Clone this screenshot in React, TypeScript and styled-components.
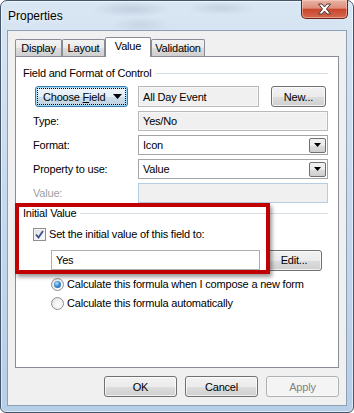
import React from 'react';
import styled, { createGlobalStyle } from 'styled-components';

const GlobalStyle = createGlobalStyle`
  * { box-sizing: border-box; }
  html, body {
    margin: 0;
    padding: 0;
    background: #ffffff;
  }
  body {
    font-family: "Liberation Sans", Arial, sans-serif;
    font-size: 11px;
    letter-spacing: -0.2px;
    color: #000;
  }
`;

const Window = styled.div`
  width: 354px;
  height: 413px;
  border: 1px solid #44566b;
  border-radius: 7px 7px 6px 6px;
  padding: 0 6px 6px;
  display: flex;
  flex-direction: column;
  background:
    radial-gradient(ellipse 40px 8px at 130px 8px, rgba(150,165,185,0.35), transparent),
    radial-gradient(ellipse 35px 7px at 220px 7px, rgba(150,165,185,0.3), transparent),
    radial-gradient(ellipse 30px 8px at 140px 24px, rgba(150,165,185,0.25), transparent),
    linear-gradient(180deg, #d9e6f3 0%, #c9dbee 40%, #b7cee7 100%);
  box-shadow: inset 0 0 0 1px rgba(255, 255, 255, 0.55);
`;

const TitleBar = styled.div`
  height: 29px;
  display: flex;
  justify-content: space-between;
  align-items: flex-start;
  margin-right: -1px;
`;

const Title = styled.div`
  padding: 7px 0 0 1px;
  font-size: 12px;
  line-height: 16px;
  letter-spacing: 0;
  color: #000;
  text-shadow: 0 0 6px rgba(255, 255, 255, 0.9);
`;

const CloseButton = styled.div`
  width: 47px;
  height: 19px;
  margin-top: -1px;
  border: 1px solid #6b2418;
  border-top: none;
  border-radius: 0 0 5px 5px;
  display: flex;
  align-items: center;
  justify-content: center;
  background: linear-gradient(180deg, #eab3a6 0%, #de8d7b 45%, #c9462d 52%, #d4694f 100%);
  box-shadow: inset 0 0 0 1px rgba(255, 220, 210, 0.45);
`;

const Client = styled.div`
  flex: 1;
  display: flex;
  flex-direction: column;
  border: 1px solid #8d9fb4;
  background: #f0f0f0;
  padding: 6px 7px 8px;
`;

const TabStrip = styled.div`
  height: 19px;
  display: flex;
  align-items: flex-end;
  position: relative;
  z-index: 1;
`;

const Tab = styled.div<{ $active?: boolean; $w: number }>`
  width: ${p => p.$w}px;
  height: ${p => (p.$active ? 20 : 17)}px;
  margin-bottom: ${p => (p.$active ? -1 : 0)}px;
  border: 1px solid #898c95;
  border-bottom: none;
  border-radius: 2px 2px 0 0;
  display: flex;
  align-items: center;
  justify-content: center;
  padding-bottom: ${p => (p.$active ? 3 : 0)}px;
  background: ${p => (p.$active
    ? '#ffffff'
    : 'linear-gradient(180deg, #f3f3f3 0%, #ebebeb 50%, #dddddd 51%, #cfcfcf 100%)')};
`;

const Panel = styled.div`
  flex: 1;
  position: relative;
  background: #fff;
  border: 1px solid #898c95;
  padding: 8px 10px 0 7px;
  display: flex;
  flex-direction: column;
`;

const GroupHeader = styled.div<{ $mt?: number }>`
  display: flex;
  align-items: center;
  gap: 4px;
  line-height: 16px;
  margin-top: ${p => p.$mt || 0}px;
  &::after {
    content: '';
    flex: 1;
    border-top: 1px solid #d5dfe5;
  }
`;

const FieldList = styled.div`
  display: flex;
  flex-direction: column;
  gap: 4px;
  margin-top: 5px;
  padding-left: 10px;
`;

const Row = styled.div<{ $h?: number }>`
  display: flex;
  align-items: center;
  height: ${p => p.$h || 20}px;
`;

const LabelCell = styled.div<{ $disabled?: boolean }>`
  width: 105px;
  flex: none;
  color: ${p => (p.$disabled ? '#a0a0a0' : '#000')};
  display: flex;
  align-items: center;
`;

const TextBox = styled.div<{ $variant?: 'normal' | 'readonly' | 'disabled'; $w?: number }>`
  height: 100%;
  ${p => (p.$w ? `width: ${p.$w}px; flex: none;` : 'flex: 1;')}
  display: flex;
  align-items: center;
  padding: 0 4px;
  border: 1px solid ${p => (p.$variant === 'disabled' ? '#b7cde2' : p.$variant === 'readonly' ? '#b9b9b9' : '#abadb3')};
  background: ${p => (p.$variant === 'normal' ? '#ffffff' : '#f0f0f0')};
  box-shadow: ${p => (p.$variant === 'readonly' ? 'inset 0 0 0 1px #f7f7f7' : 'none')};
`;

const SelectBox = styled.div`
  flex: 1;
  height: 100%;
  display: flex;
  align-items: center;
  justify-content: space-between;
  padding: 0 1px 0 4px;
  border: 1px solid #a5a5a5;
  background: #fff;
`;

const DropButton = styled.div`
  width: 17px;
  height: 15px;
  border: 1px solid #707070;
  border-radius: 2px;
  display: flex;
  align-items: center;
  justify-content: center;
  background: linear-gradient(180deg, #f2f2f2 0%, #ebebeb 50%, #dddddd 51%, #cfcfcf 100%);
`;

const PushButton = styled.div<{ $disabled?: boolean; $w: number }>`
  width: ${p => p.$w}px;
  height: 21px;
  flex: none;
  display: flex;
  align-items: center;
  justify-content: center;
  border: 1px solid ${p => (p.$disabled ? '#adb2b5' : '#707070')};
  border-radius: 3px;
  color: ${p => (p.$disabled ? '#838383' : '#000')};
  background: ${p => (p.$disabled
    ? '#f4f4f4'
    : 'linear-gradient(180deg, #f2f2f2 0%, #ebebeb 50%, #dddddd 51%, #cfcfcf 100%)')};
  box-shadow: inset 0 0 0 1px rgba(255, 255, 255, ${p => (p.$disabled ? 0.3 : 0.7)});
`;

const ChooseButton = styled.div`
  margin-left: 2px;
  width: 93px;
  height: 21px;
  padding: 2px;
  border: 1px solid #3c7fb1;
  border-radius: 3px;
  background: linear-gradient(180deg, #eef5fa 0%, #e3eef6 50%, #cfdfeb 51%, #bfd2e0 100%);
  box-shadow: inset 0 0 0 1px #9fdcfc;
`;

const FocusRect = styled.div`
  height: 100%;
  outline: 1px dotted #000;
  display: flex;
  align-items: center;
  justify-content: space-between;
  padding: 0 3px 0 5px;
  & u { text-decoration: underline; }
`;

const SideButtonSlot = styled.div`
  margin-left: auto;
  padding-right: 2px;
  display: flex;
`;

const Section = styled.div`
  padding-left: 10px;
  display: flex;
  flex-direction: column;
`;

const CheckRow = styled.div`
  height: 16px;
  margin-top: 5px;
  display: flex;
  align-items: center;
  gap: 3px;
`;

const CheckBox = styled.div`
  width: 13px;
  height: 13px;
  border: 1px solid #8f8f8f;
  background: linear-gradient(135deg, #d8d8d8 0%, #f4f4f4 60%, #ffffff 100%);
  box-shadow: inset 0 0 0 1px #f4f4f4;
  display: flex;
  align-items: center;
  justify-content: center;
`;

const InputRow = styled.div`
  height: 20px;
  margin-top: 8px;
  padding-left: 18px;
  display: flex;
  gap: 6px;
  align-items: center;
`;

const RadioRow = styled.div<{ $mt: number }>`
  height: 16px;
  margin-top: ${p => p.$mt}px;
  padding-left: 18px;
  display: flex;
  align-items: center;
  gap: 3px;
`;

const Radio = styled.div<{ $checked?: boolean }>`
  width: 13px;
  height: 13px;
  border-radius: 50%;
  border: 1px solid #8f8f8f;
  background: radial-gradient(circle at 60% 60%, #ffffff 0%, #f0f0f0 50%, #d4d4d4 100%);
  display: flex;
  align-items: center;
  justify-content: center;
  &::after {
    content: '';
    display: ${p => (p.$checked ? 'block' : 'none')};
    width: 7px;
    height: 7px;
    border-radius: 50%;
    background: radial-gradient(circle at 40% 35%, #b6e0fb 0%, #3f8ed6 45%, #1b4f93 100%);
  }
`;

const ButtonBar = styled.div`
  margin-top: 8px;
  display: flex;
  justify-content: flex-end;
  gap: 8px;
`;

const Highlight = styled.div`
  position: absolute;
  left: -1px;
  top: 146px;
  width: 255px;
  height: 71px;
  border: 4px solid #c10000;
  box-shadow: 2px 3px 4px rgba(0, 0, 0, 0.4);
  pointer-events: none;
  z-index: 2;
`;

const Arrow: React.FC = () => (
  <svg width="9" height="5" viewBox="0 0 9 5">
    <polygon points="0,0 9,0 4.5,5" fill="#000" />
  </svg>
);

const SmallArrow: React.FC = () => (
  <svg width="7" height="4" viewBox="0 0 7 4">
    <polygon points="0,0 7,0 3.5,4" fill="#000" />
  </svg>
);

const tabs = [
  { label: 'Display', w: 47 },
  { label: 'Layout', w: 43 },
  { label: 'Value', w: 46, active: true },
  { label: 'Validation', w: 54 },
];

const App: React.FC = () => (
  <>
    <GlobalStyle />
    <Window>
      <TitleBar>
        <Title>Properties</Title>
        <CloseButton>
          <svg width="15" height="12" viewBox="0 0 15 12">
            <path
              d="M1.5 1 L5 1 L7.5 4 L10 1 L13.5 1 L9.5 6 L13.5 11 L10 11 L7.5 8 L5 11 L1.5 11 L5.5 6 Z"
              fill="#ffffff"
              stroke="#4a3434"
              strokeWidth="1"
              strokeLinejoin="round"
            />
          </svg>
        </CloseButton>
      </TitleBar>
      <Client>
        <TabStrip>
          {tabs.map(t => (
            <Tab key={t.label} $w={t.w} $active={t.active}>{t.label}</Tab>
          ))}
        </TabStrip>
        <Panel>
          <GroupHeader>Field and Format of Control</GroupHeader>
          <FieldList>
            <Row $h={21}>
              <LabelCell>
                <ChooseButton>
                  <FocusRect>
                    <span>Choose <u>F</u>ield</span>
                    <Arrow />
                  </FocusRect>
                </ChooseButton>
              </LabelCell>
              <TextBox $variant="readonly" $w={121}>All Day Event</TextBox>
              <SideButtonSlot>
                <PushButton $w={55}>New...</PushButton>
              </SideButtonSlot>
            </Row>
            <Row>
              <LabelCell>Type:</LabelCell>
              <TextBox $variant="readonly">Yes/No</TextBox>
            </Row>
            <Row>
              <LabelCell>Format:</LabelCell>
              <SelectBox>
                <span>Icon</span>
                <DropButton><SmallArrow /></DropButton>
              </SelectBox>
            </Row>
            <Row>
              <LabelCell>Property to use:</LabelCell>
              <SelectBox>
                <span>Value</span>
                <DropButton><SmallArrow /></DropButton>
              </SelectBox>
            </Row>
            <Row>
              <LabelCell $disabled>Value:</LabelCell>
              <TextBox $variant="disabled" />
            </Row>
          </FieldList>

          <GroupHeader $mt={2}>Initial Value</GroupHeader>
          <Section>
            <CheckRow>
              <CheckBox>
                <svg width="9" height="9" viewBox="0 0 9 9">
                  <path d="M1 4.5 L3.5 7.5 L8 1" fill="none" stroke="#3b4f8c" strokeWidth="1.8" />
                </svg>
              </CheckBox>
              <span>Set the initial value of this field to:</span>
            </CheckRow>
            <InputRow>
              <TextBox $variant="normal" $w={209}>Yes</TextBox>
              <PushButton $w={56}>Edit...</PushButton>
            </InputRow>
            <RadioRow $mt={6}>
              <Radio $checked />
              <span>Calculate this formula when I compose a new form</span>
            </RadioRow>
            <RadioRow $mt={3}>
              <Radio />
              <span>Calculate this formula automatically</span>
            </RadioRow>
          </Section>
          <Highlight />
        </Panel>
        <ButtonBar>
          <PushButton $w={73}>OK</PushButton>
          <PushButton $w={73}>Cancel</PushButton>
          <PushButton $w={73} $disabled>Apply</PushButton>
        </ButtonBar>
      </Client>
    </Window>
  </>
);

export default App;
